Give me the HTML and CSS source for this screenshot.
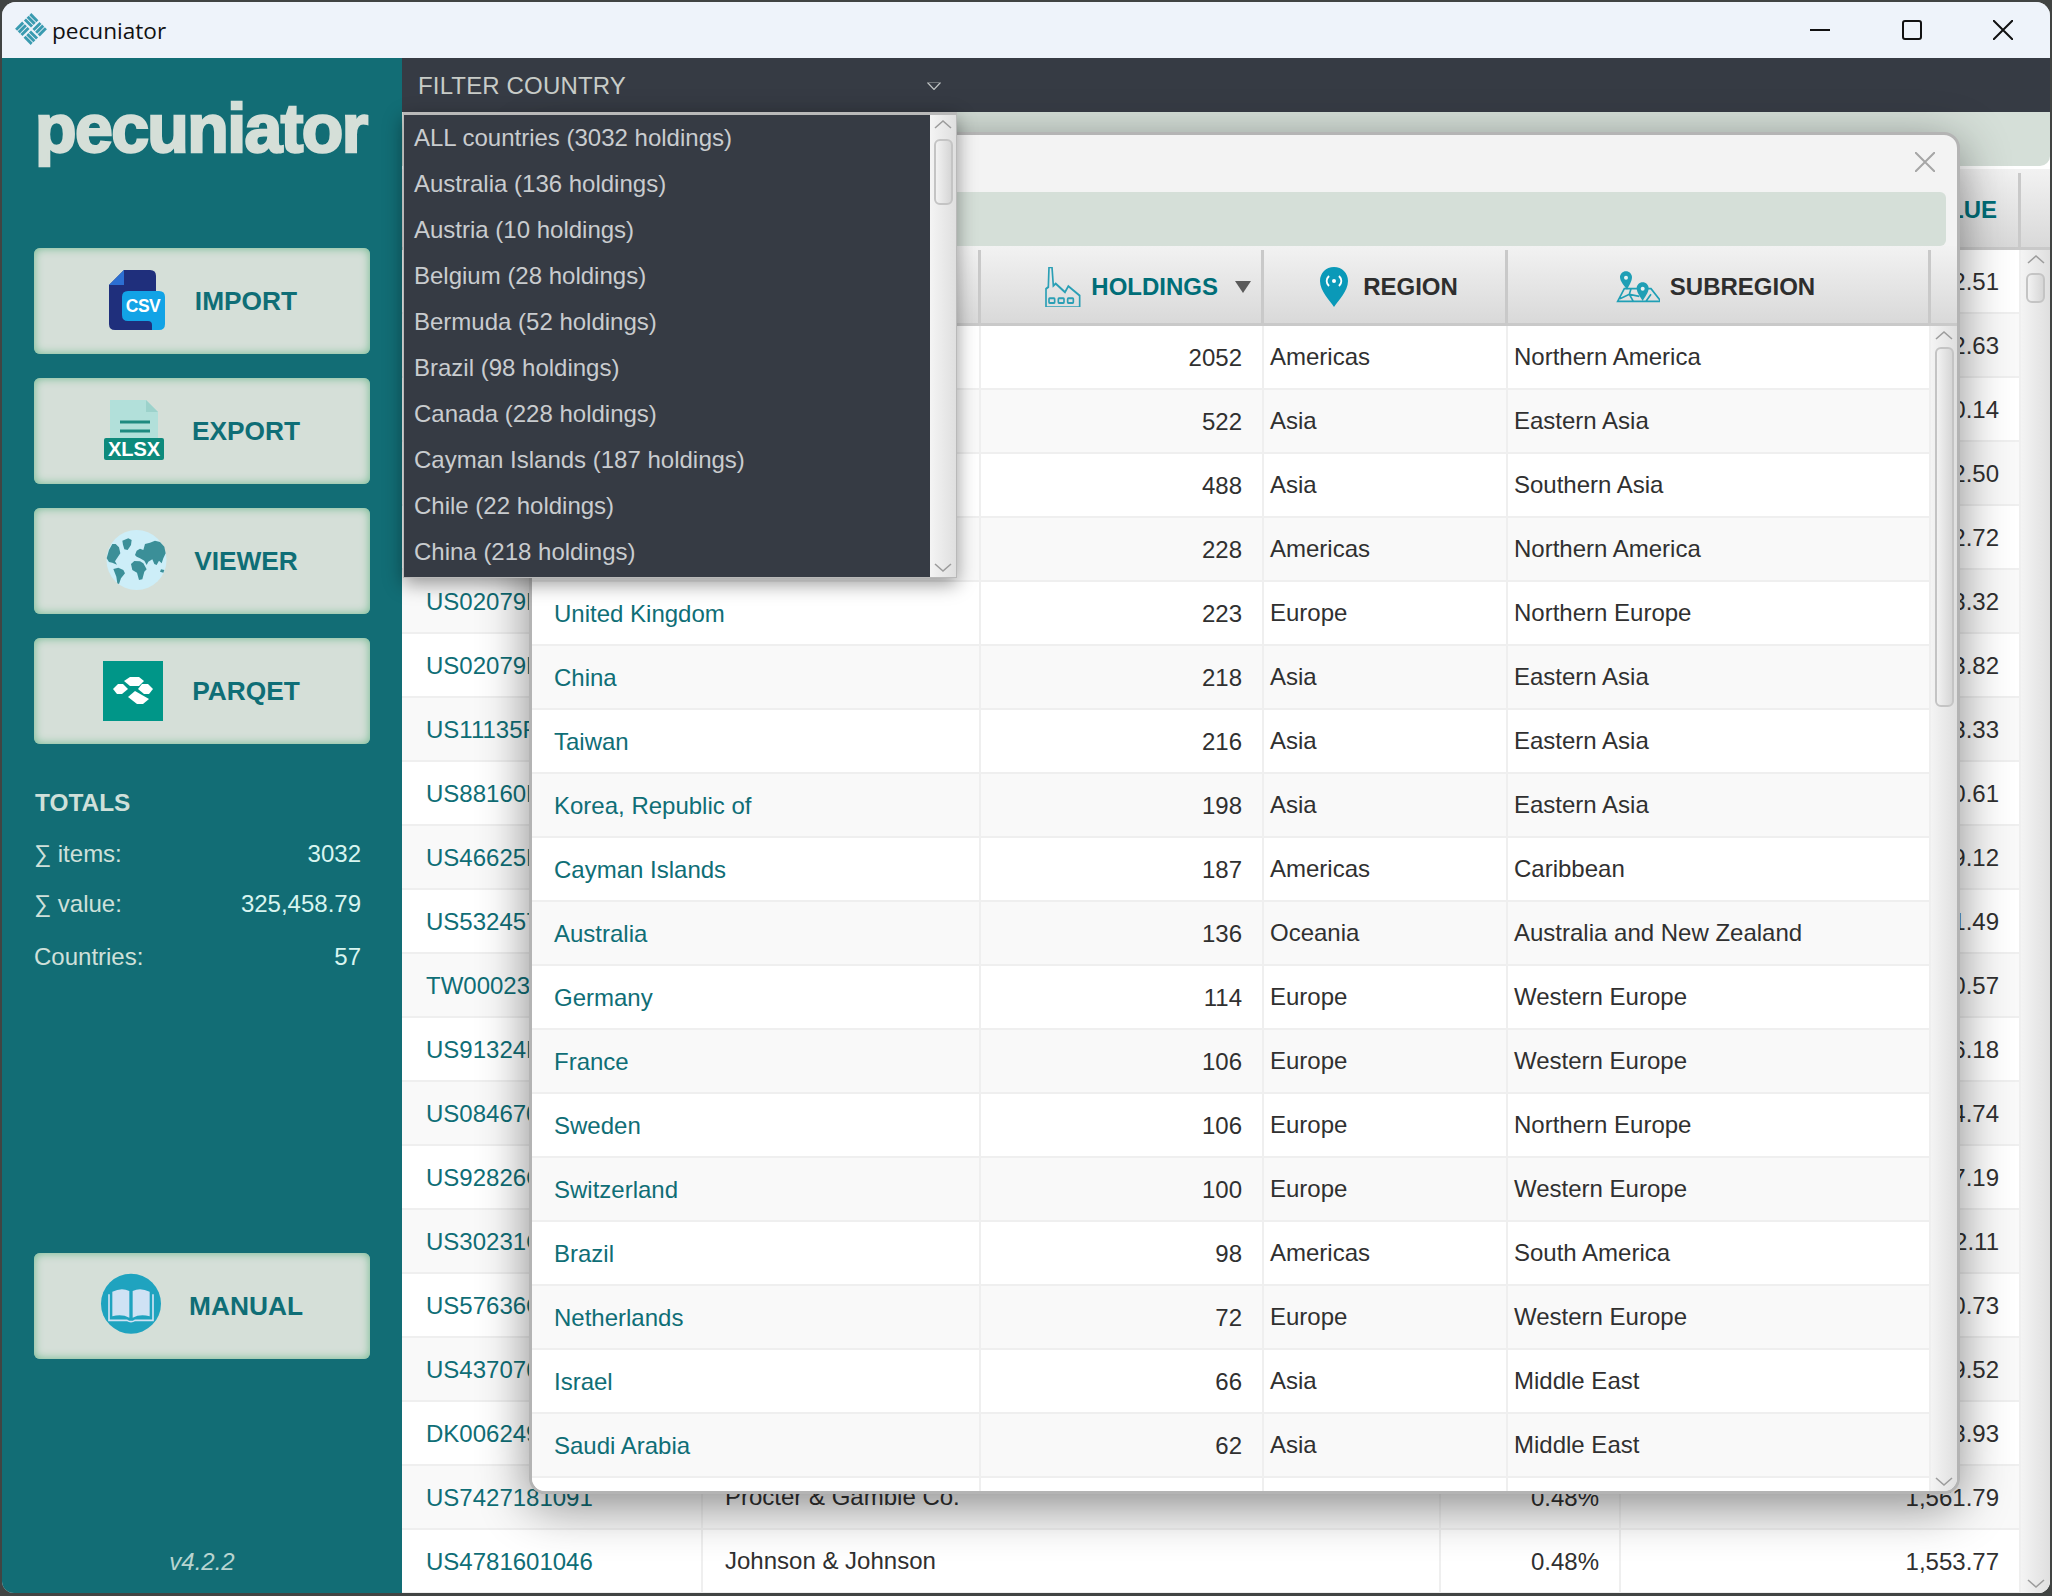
FILE: index.html
```html
<!DOCTYPE html>
<html lang="en">
  <head>
    <meta charset="UTF-8" />
    <meta name="viewport" content="width=device-width, initial-scale=1.0" />
    <title>pecuniator</title>
    <link rel="stylesheet" href="styles.css">
  </head>
  <body>
    <div class="window">
      <header class="titlebar">
        <svg class="app-icon" viewBox="0 0 32 32">
          <g transform="rotate(45 16 16)" fill="#3a9bb0">
            <rect x="5" y="4.5" width="10" height="2.9" /><rect x="5" y="8.3" width="10" height="2.9" /><rect x="5" y="12.1" width="10" height="2.9" />
            <rect x="17" y="5" width="2.9" height="10" /><rect x="20.8" y="5" width="2.9" height="10" /><rect x="24.6" y="5" width="2.9" height="10" />
            <rect x="4.5" y="17" width="2.9" height="10" /><rect x="8.3" y="17" width="2.9" height="10" /><rect x="12.1" y="17" width="2.9" height="10" />
            <rect x="17" y="17" width="10" height="2.9" /><rect x="17" y="20.8" width="10" height="2.9" /><rect x="17" y="24.6" width="10" height="2.9" />
          </g>
        </svg>
        <span class="app-name">pecuniator</span>
        <div class="window-controls">
          <svg class="win-btn" viewBox="0 0 20 20"><path d="M0 10H20" /></svg>
          <svg class="win-btn" viewBox="0 0 20 20"><rect x="1" y="1" width="18" height="18" rx="2" /></svg>
          <svg class="win-btn" viewBox="0 0 20 20"><path d="M0 0L20 20M20 0L0 20" /></svg>
        </div>
      </header>

      <div class="app">
        <aside class="sidebar">
          <div class="logo">pecuniator</div>

          <nav class="nav">
            <div class="nav-btn">
              <svg class="nav-icon" viewBox="0 0 60 60">
                <path d="M18 -1H44Q50 -1 50 5V59H9Q3 59 3 53V14Z" fill="#1f2f7c" />
                <path d="M18 -1V14H3Z" fill="#2c6fd2" />
                <path d="M22 20H53Q59 20 59 26V53Q59 59 53 59H46V54Q46 50 42 50H22Q16 50 16 44V26Q16 20 22 20Z" fill="#12a3e6" />
                <text class="csv-text" x="37" y="41" text-anchor="middle">CSV</text>
              </svg>
              <span>IMPORT</span>
            </div>
            <div class="nav-btn">
              <svg class="nav-icon" viewBox="0 0 60 60">
                <path d="M4 -1H40L52 11V39H4Z" fill="#b2e0da" />
                <path d="M40 -1L52 11H40Z" fill="#9cd2cb" />
                <path d="M14 21H44M14 30H44" stroke="#1f8a80" stroke-width="3" />
                <rect x="-2" y="37" width="60" height="22" rx="2" fill="#0d8a7c" />
                <text class="xlsx-text" x="28" y="55" text-anchor="middle">XLSX</text>
              </svg>
              <span>EXPORT</span>
            </div>
            <div class="nav-btn">
              <svg class="nav-icon" viewBox="0 0 60 60">
                <circle cx="30.5" cy="29" r="30" fill="#cdeef8" />
                <g transform="translate(-11 -11) scale(0.3333)" fill="#3b8f98">
                  <path d="M35 115L42 90L52 72L62 72L72 82L76 100L68 112L60 124L66 134L52 128L42 126Z" />
                  <path d="M82 62L100 55L110 60L108 75L98 90L88 88L84 74Z" />
                  <path d="M55 147L70 143L85 150L90 160L78 175L72 192L67 190L64 170Z" />
                  <path d="M120 105L125 92L135 86L145 90L150 72L165 68L180 62L195 66L208 80L212 100L205 115L200 130L192 122L185 135L178 132L172 118L160 125L155 135L148 122L135 115L125 110Z" />
                  <path d="M108 132L118 123L135 124L145 130L155 148L148 155L142 178L132 180L126 158L112 150Z" />
                  <path d="M198 148L208 150L205 158L195 155Z" />
                </g>
              </svg>
              <span>VIEWER</span>
            </div>
            <div class="nav-btn">
              <svg class="nav-icon" viewBox="0 0 60 60">
                <rect x="-3" y="0" width="60" height="60" fill="#009688" />
                <g fill="#fff" transform="translate(-3 0)">
                  <path d="M27 16H36L41 20L36 25H27L21 20Z" />
                  <path d="M15 23L20 23L25 28L19 33L14 33L10 28Z" />
                  <path d="M39 23L45 23L50 28L46 33L41 33L35 28Z" />
                  <path d="M32 30L46 38L40 43L34 43L25 36Z" />
                </g>
              </svg>
              <span>PARQET</span>
            </div>
          </nav>

          <section class="totals">
            <h3 class="totals-title">TOTALS</h3>
            <div class="totals-row"><span>∑ items:</span><b>3032</b></div>
            <div class="totals-row"><span>∑ value:</span><b>325,458.79</b></div>
            <div class="totals-row totals-row-last"><span>Countries:</span><b>57</b></div>
          </section>

          <div class="nav-btn manual-btn">
            <svg class="nav-icon" viewBox="0 0 60 60">
              <g transform="translate(-11 -5) scale(0.3333)">
                <circle cx="108" cy="98" r="90" fill="#1fa3bf" />
                <path d="M52 62Q80 48 103 60V140Q80 128 52 136Z" fill="#cfe2f4" />
                <path d="M113 60Q136 48 164 62V136Q136 128 113 140Z" fill="#cfe2f4" />
                <path d="M42 70V148H96Q108 156 120 148H174V70" fill="none" stroke="#cfe2f4" stroke-width="5" />
              </g>
            </svg>
            <span>MANUAL</span>
          </div>

          <div class="version">v4.2.2</div>
        </aside>

        <main class="main">
          <div class="topbar">
            <div class="filter-combo">
              <span>FILTER COUNTRY</span>
              <svg class="combo-arrow" viewBox="0 0 14 8"><path d="M0.5 0.5L7 7.5L13.5 0.5" /><path class="combo-arrow-top" d="M0.5 0.5H13.5" /></svg>
            </div>
          </div>
          <div class="strip"></div>

          <div class="grid-head">
            <div class="head-cell col-isin">ISIN</div>
            <div class="head-cell col-name">NAME</div>
            <div class="head-cell col-pct">%</div>
            <div class="head-cell col-value sorted">VALUE</div>
            <div class="head-cell col-rest"></div>
          </div>

          <div class="grid-wrap">
            <table class="grid grid-holdings">
              <colgroup><col class="col-isin" /><col class="col-name" /><col class="col-pct" /><col class="col-value" /></colgroup>
              <tbody>
                <tr><td class="link">US5949181045</td><td>Microsoft Corp.</td><td class="num">3.64%</td><td class="num">11,842.51</td></tr>
                <tr><td class="link">US0378331005</td><td>Apple Inc.</td><td class="num">3.30%</td><td class="num">10,752.63</td></tr>
                <tr><td class="link">US67066G1040</td><td>NVIDIA Corp.</td><td class="num">3.02%</td><td class="num">9,830.14</td></tr>
                <tr><td class="link">US0231351067</td><td>Amazon.com Inc.</td><td class="num">1.96%</td><td class="num">6,382.50</td></tr>
                <tr><td class="link">US30303M1027</td><td>Meta Platforms Inc.</td><td class="num">1.21%</td><td class="num">3,942.72</td></tr>
                <tr><td class="link">US02079K3059</td><td>Alphabet Inc. A</td><td class="num">1.16%</td><td class="num">3,763.32</td></tr>
                <tr><td class="link">US02079K1079</td><td>Alphabet Inc. C</td><td class="num">1.01%</td><td class="num">3,283.82</td></tr>
                <tr><td class="link">US11135F1012</td><td>Broadcom Inc.</td><td class="num">0.92%</td><td class="num">2,993.33</td></tr>
                <tr><td class="link">US88160R1014</td><td>Tesla Inc.</td><td class="num">0.88%</td><td class="num">2,870.61</td></tr>
                <tr><td class="link">US46625H1005</td><td>JPMorgan Chase</td><td class="num">0.81%</td><td class="num">2,639.12</td></tr>
                <tr><td class="link">US5324571083</td><td>Eli Lilly</td><td class="num">0.77%</td><td class="num">2,511.49</td></tr>
                <tr><td class="link">TW0002330008</td><td>Taiwan Semiconductor</td><td class="num">0.74%</td><td class="num">2,410.57</td></tr>
                <tr><td class="link">US91324P1021</td><td>UnitedHealth Group</td><td class="num">0.70%</td><td class="num">2,276.18</td></tr>
                <tr><td class="link">US0846707026</td><td>Berkshire Hathaway</td><td class="num">0.66%</td><td class="num">2,154.74</td></tr>
                <tr><td class="link">US92826C8394</td><td>Visa Inc.</td><td class="num">0.63%</td><td class="num">2,057.19</td></tr>
                <tr><td class="link">US30231G1022</td><td>Exxon Mobil</td><td class="num">0.60%</td><td class="num">1,962.11</td></tr>
                <tr><td class="link">US57636Q1040</td><td>Mastercard Inc.</td><td class="num">0.58%</td><td class="num">1,890.73</td></tr>
                <tr><td class="link">US4370761029</td><td>Home Depot</td><td class="num">0.55%</td><td class="num">1,789.52</td></tr>
                <tr><td class="link">DK0062498333</td><td>Novo Nordisk</td><td class="num">0.53%</td><td class="num">1,723.93</td></tr>
                <tr><td class="link">US7427181091</td><td>Procter &amp; Gamble Co.</td><td class="num">0.48%</td><td class="num">1,561.79</td></tr>
                <tr><td class="link">US4781601046</td><td>Johnson &amp; Johnson</td><td class="num">0.48%</td><td class="num">1,553.77</td></tr>
              </tbody>
            </table>
            <div class="scroll scroll-page">
              <svg class="scroll-arrow" viewBox="0 0 18 10"><path d="M1 9L9 2L17 9" /></svg>
              <div class="thumb thumb-page"></div>
              <svg class="scroll-arrow arrow-end" viewBox="0 0 18 10"><path d="M1 1L9 8L17 1" /></svg>
            </div>
          </div>

          <!-- countries dialog -->
          <div class="modal">
            <div class="modal-head">
              <svg class="modal-close" viewBox="0 0 20 20"><path d="M0 0L20 20M20 0L0 20" /></svg>
            </div>
            <div class="modal-strip"></div>
            <div class="grid-head modal-grid-head">
              <div class="head-cell mcol-country">COUNTRY</div>
              <div class="head-cell mcol-holdings sorted">
                <svg class="head-icon" width="36" height="40" viewBox="0 0 36 40">
                  <g transform="translate(-10 -13.5) scale(0.3333 0.43)" fill="none" stroke="#2a9fb5" stroke-width="5">
                    <path d="M33 125V82L40 78L42 32H51L55 75L62 70L90 90L100 76L134 98V125Z" />
                    <rect x="42" y="104" width="17" height="11" rx="2" />
                    <rect x="70" y="104" width="17" height="11" rx="2" />
                    <rect x="98" y="104" width="17" height="11" rx="2" />
                  </g>
                </svg>
                HOLDINGS
                <svg class="sort-arrow" viewBox="0 0 16 12"><path d="M0 0H16L8 12Z" /></svg>
              </div>
              <div class="head-cell mcol-region">
                <svg class="head-icon" width="28" height="40" viewBox="0 0 28 40">
                  <path d="M14 0C6 0 0 6 0 14C0 24 10 34 14 40C18 34 28 24 28 14C28 6 22 0 14 0Z" fill="#0a99b8" />
                  <path d="M9 9C6 12 6 16 9 19M19 9C22 12 22 16 19 19" fill="none" stroke="#fff" stroke-width="2" />
                  <circle cx="14" cy="14" r="2" fill="#fff" />
                </svg>
                REGION
              </div>
              <div class="head-cell mcol-subregion">
                <svg class="head-icon" width="44" height="40" viewBox="0 0 44 40">
                  <g transform="translate(-20 -10) scale(0.3333)">
                    <path d="M85 95H165L195 133H65ZM72 125L100 112L112 133M105 95L100 112L130 118M165 112L150 133" fill="none" stroke="#1f9fb5" stroke-width="5" />
                    <path d="M90 43C80 43 72 51 72 61C72 73 86 88 93 98C98 88 108 73 108 61C108 51 100 43 90 43Z" fill="#1f9fb5" />
                    <circle cx="90" cy="62" r="6" fill="#e8f2f2" />
                    <path d="M140 76C130 76 122 84 122 94C122 106 134 122 140 132C146 122 158 106 158 94C158 84 150 76 140 76Z" fill="#1f9fb5" />
                    <circle cx="140" cy="95" r="6" fill="#e8f2f2" />
                  </g>
                </svg>
                SUBREGION
              </div>
              <div class="head-cell mcol-rest"></div>
            </div>
            <div class="grid-wrap">
              <table class="grid grid-countries">
                <colgroup><col class="mcol-country" /><col class="mcol-holdings" /><col class="mcol-region" /><col class="mcol-subregion" /></colgroup>
                <tbody>
                  <tr><td class="link">United States</td><td class="num">2052</td><td>Americas</td><td>Northern America</td></tr>
                  <tr><td class="link">Japan</td><td class="num">522</td><td>Asia</td><td>Eastern Asia</td></tr>
                  <tr><td class="link">India</td><td class="num">488</td><td>Asia</td><td>Southern Asia</td></tr>
                  <tr><td class="link">Canada</td><td class="num">228</td><td>Americas</td><td>Northern America</td></tr>
                  <tr><td class="link">United Kingdom</td><td class="num">223</td><td>Europe</td><td>Northern Europe</td></tr>
                  <tr><td class="link">China</td><td class="num">218</td><td>Asia</td><td>Eastern Asia</td></tr>
                  <tr><td class="link">Taiwan</td><td class="num">216</td><td>Asia</td><td>Eastern Asia</td></tr>
                  <tr><td class="link">Korea, Republic of</td><td class="num">198</td><td>Asia</td><td>Eastern Asia</td></tr>
                  <tr><td class="link">Cayman Islands</td><td class="num">187</td><td>Americas</td><td>Caribbean</td></tr>
                  <tr><td class="link">Australia</td><td class="num">136</td><td>Oceania</td><td>Australia and New Zealand</td></tr>
                  <tr><td class="link">Germany</td><td class="num">114</td><td>Europe</td><td>Western Europe</td></tr>
                  <tr><td class="link">France</td><td class="num">106</td><td>Europe</td><td>Western Europe</td></tr>
                  <tr><td class="link">Sweden</td><td class="num">106</td><td>Europe</td><td>Northern Europe</td></tr>
                  <tr><td class="link">Switzerland</td><td class="num">100</td><td>Europe</td><td>Western Europe</td></tr>
                  <tr><td class="link">Brazil</td><td class="num">98</td><td>Americas</td><td>South America</td></tr>
                  <tr><td class="link">Netherlands</td><td class="num">72</td><td>Europe</td><td>Western Europe</td></tr>
                  <tr><td class="link">Israel</td><td class="num">66</td><td>Asia</td><td>Middle East</td></tr>
                  <tr><td class="link">Saudi Arabia</td><td class="num">62</td><td>Asia</td><td>Middle East</td></tr>
                  <tr><td class="link"></td><td class="num"></td><td></td><td></td></tr>
                </tbody>
              </table>
              <div class="scroll scroll-modal">
                <svg class="scroll-arrow" viewBox="0 0 18 10"><path d="M1 9L9 2L17 9" /></svg>
                <div class="thumb thumb-modal"></div>
                <svg class="scroll-arrow arrow-end" viewBox="0 0 18 10"><path d="M1 1L9 8L17 1" /></svg>
              </div>
            </div>
          </div>

          <!-- open country filter -->
          <div class="dropdown">
            <ul class="dropdown-list">
              <li>ALL countries (3032 holdings)</li>
              <li>Australia (136 holdings)</li>
              <li>Austria (10 holdings)</li>
              <li>Belgium (28 holdings)</li>
              <li>Bermuda (52 holdings)</li>
              <li>Brazil (98 holdings)</li>
              <li>Canada (228 holdings)</li>
              <li>Cayman Islands (187 holdings)</li>
              <li>Chile (22 holdings)</li>
              <li>China (218 holdings)</li>
            </ul>
            <div class="scroll scroll-dropdown">
              <svg class="scroll-arrow" viewBox="0 0 18 10"><path d="M1 9L9 2L17 9" /></svg>
              <div class="thumb thumb-dropdown"></div>
              <svg class="scroll-arrow arrow-end" viewBox="0 0 18 10"><path d="M1 1L9 8L17 1" /></svg>
            </div>
          </div>
        </main>
      </div>
    </div>
  </body>
</html>
```

FILE: styles.css
```css
:root {
  --teal: #126d75;
  --teal-text: #0f6e76;
  --sage: #d5dfd8;
  --dark: #363b44;
  --line: #efefef;
  --head-line: #c9c9c9;
}

* {
  box-sizing: border-box;
}

html,
body {
  height: 100%;
}

body {
  margin: 0;
  padding: 2px 2px 3px;
  background-color: #414443;
  font-family: "Liberation Sans", Arial, sans-serif;
  font-size: 24px;
  color: #303030;
}

.window {
  height: 100%;
  display: flex;
  flex-direction: column;
  border-radius: 14px 14px 12px 12px;
  overflow: hidden;
  background-color: #dcdcdc;
}

/* title bar */
.titlebar {
  flex: none;
  height: 56px;
  display: flex;
  align-items: center;
  padding-left: 13px;
  background-color: #eef3fa;
}
.app-icon {
  width: 32px;
  height: 32px;
  margin-top: -3px;
}
.app-name {
  margin-left: 5px;
  font-family: "Open Sans", sans-serif;
  font-size: 22.6px;
  color: #111;
}
.window-controls {
  margin-left: auto;
  display: flex;
  align-items: center;
  gap: 71.5px;
  padding-right: 37px;
}
.win-btn {
  width: 20px;
  height: 20px;
  fill: none;
  stroke: #111;
  stroke-width: 2;
}

.app {
  flex: 1;
  min-height: 0;
  display: flex;
}

/* sidebar */
.sidebar {
  flex: none;
  width: 400px;
  display: flex;
  flex-direction: column;
  padding: 0 32px;
  background-color: var(--teal);
}
.logo {
  height: 80px;
  margin: 30px 0 0 1px;
  line-height: 80px;
  font-size: 68px;
  font-weight: 700;
  letter-spacing: -1.6px;
  color: var(--sage);
  -webkit-text-stroke: 2.4px var(--sage);
}
.nav {
  display: flex;
  flex-direction: column;
  gap: 24px;
  margin-top: 80px;
}
.nav-btn {
  height: 106px;
  display: grid;
  grid-template-columns: 60px 160px;
  align-items: center;
  padding-left: 72px;
  border-radius: 6px;
  background-color: var(--sage);
  box-shadow: inset 0 0 10px #6fb98f;
  font-size: 26.3px;
  font-weight: 700;
  color: var(--teal-text);
  text-align: center;
}
.nav-icon {
  width: 60px;
  height: 60px;
  overflow: visible;
}
.csv-text {
  font-size: 17.5px;
  font-weight: 700;
  letter-spacing: -0.5px;
  fill: #fff;
}
.xlsx-text {
  font-size: 20px;
  font-weight: 700;
  fill: #fff;
}

.totals {
  margin-top: 44px;
}
.totals-title {
  margin: 0 0 19px 1px;
  font-size: 24.4px;
  line-height: 30px;
  color: #cfe0da;
}
.totals-row {
  display: flex;
  justify-content: space-between;
  height: 50px;
  line-height: 34px;
  padding-right: 9px;
  color: #cfe0da;
}
.totals-row b {
  font-weight: 400;
  color: #d8f5f0;
}
.totals-row-last {
  margin-top: 3px;
}

.manual-btn {
  margin-top: auto;
}
.version {
  margin-top: 189px;
  margin-bottom: 17px;
  line-height: 28px;
  font-style: italic;
  text-align: center;
  color: #b8d4d0;
}

/* main area */
.main {
  position: relative;
  flex: 1;
  min-width: 0;
  display: flex;
  flex-direction: column;
  background-color: #fff;
}
.topbar {
  flex: none;
  height: 54px;
  background-color: var(--dark);
}
.filter-combo {
  width: 555px;
  height: 54px;
  display: flex;
  align-items: center;
  padding: 2px 16px 0;
  letter-spacing: 0.15px;
  color: #c8ccc8;
}
.combo-arrow {
  width: 14px;
  height: 8px;
  margin-left: auto;
  fill: none;
  stroke: #c0c4c4;
  stroke-width: 1.2;
}
.combo-arrow-top {
  stroke: #6f7478;
}
.strip {
  flex: none;
  height: 54px;
  margin-bottom: 3px;
  background-color: var(--sage);
  border-radius: 0 0 10px 0;
}

/* column widths */
.col-isin { width: 301px; }
.col-name { width: 738px; }
.col-pct { width: 180px; }
.col-value { width: 400px; }
.col-rest { width: 29px; }
.mcol-country { width: 449px; }
.mcol-holdings { width: 283px; }
.mcol-region { width: 244px; }
.mcol-subregion { width: 423px; }
.mcol-rest { width: 26px; }

/* table header */
.grid-head {
  flex: none;
  height: 81px;
  display: flex;
  background: linear-gradient(#f2f2f2, #d9d9d9);
  border-bottom: 3px solid var(--head-line);
}
.head-cell {
  flex: none;
  display: flex;
  align-items: center;
  justify-content: center;
  gap: 10px;
  margin-top: 4px;
  border-right: 3px solid var(--head-line);
  font-weight: 700;
  color: #2e2e2e;
}
.head-cell:last-child {
  border-right: none;
}
.col-value.head-cell {
  justify-content: flex-end;
  padding-right: 21px;
}
.sorted {
  color: #006e78;
}
.sort-arrow {
  width: 16px;
  height: 12px;
  margin-left: 7px;
  fill: #5a5a5a;
}
.mcol-holdings.head-cell {
  justify-content: flex-end;
  padding-right: 10px;
}
.mcol-region.head-cell {
  gap: 15px;
  padding-left: 9px;
}
.mcol-subregion.head-cell {
  padding-right: 5px;
}

/* rows */
.grid-wrap {
  flex: 1;
  min-height: 0;
  display: flex;
  overflow: hidden;
}
.grid {
  flex: none;
  table-layout: fixed;
  border-collapse: separate;
  border-spacing: 0;
  align-self: flex-start;
}
.grid-holdings {
  width: 1619px;
}
.grid-countries {
  width: 1399px;
}
.grid td {
  height: 64px;
  padding: 0 6px;
  background-color: #fff;
  border-right: 2px solid var(--line);
  border-bottom: 2px solid var(--line);
  white-space: nowrap;
  overflow: hidden;
}
.grid tr:nth-child(even) td {
  background-color: #f9f9f9;
}
.grid td.link {
  padding: 2px 21px 0 22px;
  color: var(--teal-text);
}
.grid td.num {
  padding: 2px 20px 0 6px;
  text-align: right;
}
.grid-holdings td {
  padding-left: 22px;
}
.grid-holdings td.link {
  padding-left: 24px;
}
.grid-countries td:nth-child(3),
.grid-countries td:nth-child(4) {
  padding-left: 6px;
}

/* scrollbars */
.scroll {
  flex: 1;
  display: flex;
  flex-direction: column;
  align-items: center;
  padding: 4px 0;
  background: linear-gradient(90deg, #f4f4f4, #dfdfdf);
}
.scroll-arrow {
  flex: none;
  width: 18px;
  height: 10px;
  fill: none;
  stroke: #9c9c9c;
  stroke-width: 1.6;
}
.arrow-end {
  margin-top: auto;
}
.thumb {
  flex: none;
  width: 19px;
  border: 2px solid #c4c4c4;
  border-radius: 6px;
  background: linear-gradient(90deg, #f2f2f2, #d6d6d6);
}
.thumb-page {
  height: 30px;
  margin-top: 9px;
}
.thumb-modal {
  height: 360px;
  margin-top: 7px;
}
.thumb-dropdown {
  height: 66px;
  margin-top: 10px;
}

/* countries dialog */
.modal {
  position: absolute;
  left: 127px;
  top: 74px;
  width: 1431px;
  height: 1362px;
  display: flex;
  flex-direction: column;
  border: 3px solid #b4b4b4;
  border-radius: 16px;
  overflow: hidden;
  background-color: #f3f3f3;
  box-shadow: 0 12px 50px rgba(0, 0, 0, 0.45);
}
.modal-head {
  flex: none;
  height: 57px;
  display: flex;
  align-items: center;
  justify-content: flex-end;
  padding: 0 22px 3px 0;
}
.modal-close {
  width: 20px;
  height: 20px;
  fill: none;
  stroke: #a6a6a6;
  stroke-width: 2;
}
.modal-strip {
  flex: none;
  height: 54px;
  margin-right: 11px;
  border-radius: 6px;
  background-color: var(--sage);
}
.modal-grid-head {
  height: 80px;
}

/* filter dropdown */
.dropdown {
  position: absolute;
  left: 1px;
  top: 54px;
  width: 554px;
  height: 466px;
  display: flex;
  border: 1px solid #b9b9b9;
  border-top-width: 3px;
  background-color: var(--dark);
  box-shadow: 0 6px 18px rgba(0, 0, 0, 0.4);
}
.dropdown-list {
  flex: none;
  width: 526px;
  margin: 0;
  padding: 0;
  list-style: none;
  color: #c9cccf;
}
.dropdown-list li {
  height: 46px;
  padding-left: 10px;
  line-height: 46px;
}
```
